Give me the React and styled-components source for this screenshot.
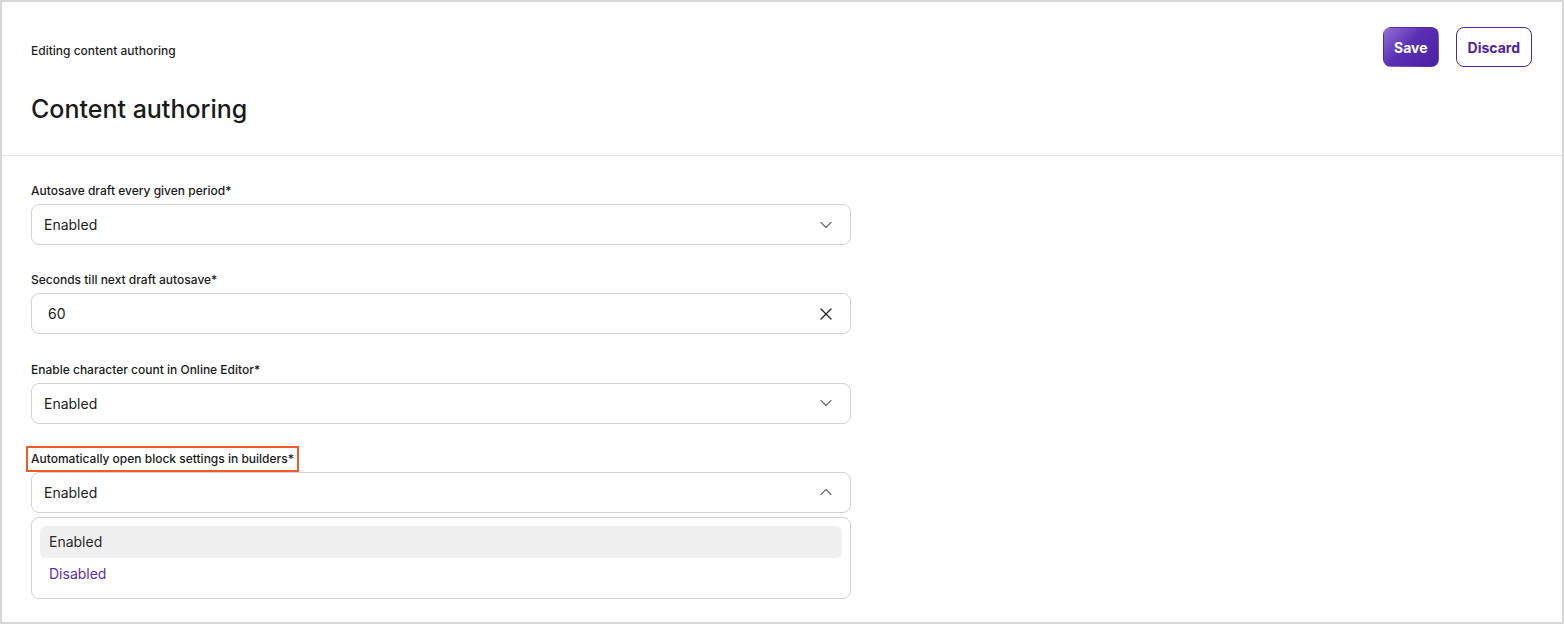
import React from 'react';
import styled, { createGlobalStyle } from 'styled-components';
import { ChevronDown, ChevronUp, X } from 'lucide-react';

const GlobalStyle = createGlobalStyle`
  * { box-sizing: border-box; }
  body {
    margin: 0;
    font-family: Inter, "Open Sans", sans-serif;
    color: #1f1f1f;
    background: #ffffff;
  }
`;

const Frame = styled.div`
  width: 1564px;
  height: 624px;
  border: 2px solid #d6d6d6;
  background: #ffffff;
  overflow: hidden;
`;

const Header = styled.header`
  padding: 25px 30px 30px 29px;
  border-bottom: 1px solid #e4e4e4;
`;

const TopRow = styled.div`
  display: flex;
  align-items: center;
  justify-content: space-between;
  height: 40px;
`;

const Breadcrumb = styled.div`
  font-size: 12px;
  font-weight: 500;
  color: #1f1f1f;
  margin-top: 7px;
`;

const Actions = styled.div`
  display: flex;
  gap: 17px;
`;

const Button = styled.button`
  height: 40px;
  padding: 0 ${p => (p.$primary ? '10px' : '11px')};
  border-radius: 8px;
  font-family: inherit;
  font-size: 14px;
  font-weight: 700;
  cursor: pointer;
  border: 1px solid ${p => (p.$primary ? 'transparent' : '#4f26a8')};
  color: ${p => (p.$primary ? '#ffffff' : '#4f26a8')};
  background: ${p =>
    p.$primary ? 'linear-gradient(135deg, #9470d8 0%, #5a2fb3 45%, #4a21a0 100%)' : '#ffffff'};
`;

const Title = styled.h1`
  margin: 26px 0 0;
  font-size: 25px;
  line-height: 32px;
  font-weight: 500;
  color: #1a1a1a;
`;

const Form = styled.main`
  padding: 27px 29px 0;
  display: flex;
  flex-direction: column;
  gap: 27.3px;
  width: 878px;
`;

const Field = styled.div`
  display: flex;
  flex-direction: column;
  align-items: flex-start;
`;

const Label = styled.label`
  display: inline-block;
  font-size: 12px;
  line-height: 16px;
  font-weight: 500;
  color: #1a1a1a;
  margin-bottom: 5px;
  ${p => p.$highlight && `outline: 2px solid #f25a28; outline-offset: 3px;`}
`;

const Control = styled.div`
  width: 820px;
  height: 41px;
  border: 1px solid #d3d3d3;
  border-radius: 8px;
  display: flex;
  align-items: center;
  justify-content: space-between;
  padding: 0 14px 0 ${p => (p.$input ? '16px' : '12px')};
  font-size: 14px;
  color: #222222;
  background: #ffffff;
`;

const Icon = styled.span`
  display: flex;
  color: ${p => (p.$dark ? '#222222' : '#6f6f6f')};
`;

const Menu = styled.ul`
  list-style: none;
  margin: 4px 0 0;
  width: 820px;
  padding: 8px;
  border: 1px solid #d3d3d3;
  border-radius: 8px;
  background: #ffffff;
`;

const Option = styled.li`
  height: 32px;
  padding: 0 9px;
  display: flex;
  align-items: center;
  border-radius: 6px;
  font-size: 14px;
  color: ${p => (p.$active ? '#2a2a2a' : '#5a2fb8')};
  background: ${p => (p.$active ? '#f0f0f0' : 'transparent')};
`;

const SelectField = ({ label, value }) => (
  <Field>
    <Label>{label}</Label>
    <Control>
      <span>{value}</span>
      <Icon><ChevronDown size={20} strokeWidth={1.4} /></Icon>
    </Control>
  </Field>
);

export default function App() {
  return (
    <>
      <GlobalStyle />
      <Frame>
        <Header>
          <TopRow>
            <Breadcrumb>Editing content authoring</Breadcrumb>
            <Actions>
              <Button $primary>Save</Button>
              <Button>Discard</Button>
            </Actions>
          </TopRow>
          <Title>Content authoring</Title>
        </Header>
        <Form>
          <SelectField label="Autosave draft every given period*" value="Enabled" />
          <Field>
            <Label>Seconds till next draft autosave*</Label>
            <Control $input>
              <span>60</span>
              <Icon $dark><X size={20} strokeWidth={1.5} /></Icon>
            </Control>
          </Field>
          <SelectField label="Enable character count in Online Editor*" value="Enabled" />
          <Field>
            <Label $highlight>Automatically open block settings in builders*</Label>
            <Control>
              <span>Enabled</span>
              <Icon><ChevronUp size={20} strokeWidth={1.4} /></Icon>
            </Control>
            <Menu>
              <Option $active>Enabled</Option>
              <Option>Disabled</Option>
            </Menu>
          </Field>
        </Form>
      </Frame>
    </>
  );
}
